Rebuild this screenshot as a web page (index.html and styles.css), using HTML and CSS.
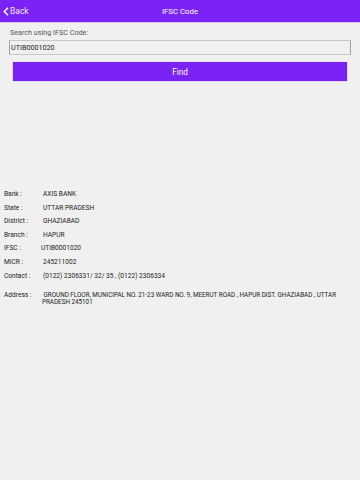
FILE: index.html
```html
<!DOCTYPE html>
<html lang="en">
<head>
    <meta charset="UTF-8">
    <meta name="viewport" content="width=device-width, initial-scale=1.0">
    <title>IFSC Code</title>
    <link rel="stylesheet" href="styles.css">
</head>
<body>
    <div id="header">
        <div class="back">
            <svg width="6" height="9" viewBox="0 0 6 9"><path d="M5 0.8 L1.3 4.5 L5 8.2" fill="none" stroke="#fff" stroke-width="1.5"/></svg>
            <span>Back</span>
        </div>
        <div class="title">IFSC Code</div>
    </div>
    <div id="search">
        <div class="search-label">Search using IFSC Code:</div>
        <input type="text" id="code" value="UTIB0001020" />
        <button id="find">Find</button>
    </div>
    <div id="details">
        <div class="row"><span class="label">Bank :</span><span class="value">AXIS BANK</span></div>
        <div class="row"><span class="label">State :</span><span class="value">UTTAR PRADESH</span></div>
        <div class="row"><span class="label">District :</span><span class="value">GHAZIABAD</span></div>
        <div class="row"><span class="label">Branch :</span><span class="value">HAPUR</span></div>
        <div class="row"><span class="label">IFSC :</span><span class="value shift">UTIB0001020</span></div>
        <div class="row"><span class="label">MICR :</span><span class="value">245211002</span></div>
        <div class="row"><span class="label">Contact :</span><span class="value">(0122) 2306331/ 32/ 35 , (0122) 2306334</span></div>
        <div class="row address"><span class="label">Address :</span><span class="value">&nbsp;GROUND FLOOR, MUNICIPAL NO. 21-23 WARD NO. 9, MEERUT ROAD , HAPUR DIST. GHAZIABAD , UTTAR PRADESH 245101</span></div>
    </div>
</body>
</html>
```

FILE: styles.css
```css
body {
    font-family: Roboto, "Liberation Sans", sans-serif;
    margin: 0;
    background-color: #f0f0f0;
    height: 480px;
    color: #222;
}
#header {
    background-color: #7b22f6;
    height: 22px;
    display: flex;
    align-items: center;
    justify-content: center;
    position: relative;
    color: #fff;
    font-size: 7.8px;
    border-bottom: 1px solid #d8c8f0;
}
.back {
    position: absolute;
    left: 3px;
    top: 6px;
    display: flex;
    align-items: center;
    gap: 1px;
    font-size: 8.5px;
}
.back span {
    opacity: 0.9;
}
#search {
    padding: 5px 9px 0 9px;
}
.search-label {
    font-size: 7.2px;
    color: #555;
    padding-left: 1px;
    height: 12px;
    line-height: 10px;
}
#code {
    display: block;
    box-sizing: border-box;
    width: 342px;
    height: 15px;
    margin: 0;
    padding: 0 1px;
    font-family: Roboto, "Liberation Sans", sans-serif;
    font-size: 7.2px;
    color: #222;
    background-color: #f0f0f0;
    border: 1px solid #c8c8c8;
    border-left: 1px solid #a0a0a0;
    border-right: 1px solid #a0a0a0;
}
#find {
    display: block;
    box-sizing: border-box;
    width: 334px;
    height: 19px;
    margin: 7px 0 0 4px;
    font-family: Roboto, "Liberation Sans", sans-serif;
    font-size: 8.2px;
    color: #fff;
    background-color: #7b22f6;
    border: none;
    padding: 0;
    box-shadow: 0 0 1px rgba(120, 40, 240, 0.6);
}
#details {
    padding: 107px 0 0 4px;
    font-size: 6.6px;
}
.row {
    display: flex;
    height: 13.6px;
    line-height: 13.6px;
}
.label {
    width: 39px;
    flex-shrink: 0;
}
.value.shift {
    margin-left: -2px;
}
.row.address {
    margin-top: 9px;
    height: auto;
    line-height: 7px;
}
.row.address .label {
    width: 38px;
}
.row.address .value {
    width: 300px;
    font-size: 6.3px;
}
```
